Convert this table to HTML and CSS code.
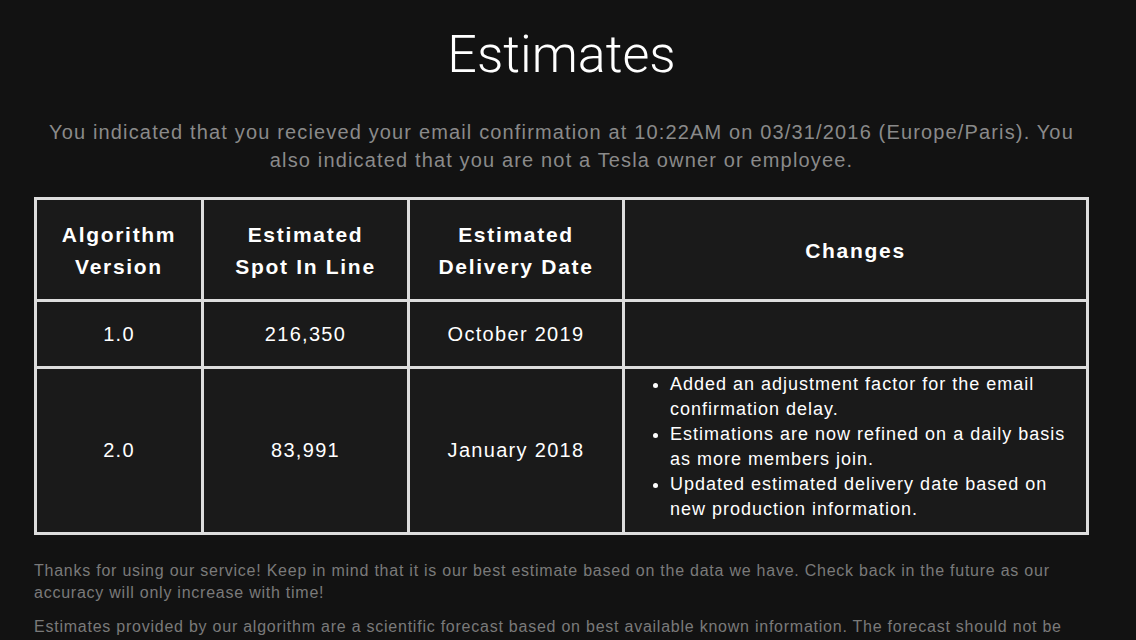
FILE: index.html
```html
<!DOCTYPE html>
<html>
<head>
<meta charset="utf-8">
<link rel="stylesheet" href="styles.css">
</head>
<body>
<main class="page">
  <h1 class="title">Estimates</h1>
  <p class="intro">You indicated that you recieved your email confirmation at 10:22AM on 03/31/2016 (Europe/Paris). You also indicated that you are not a Tesla owner or employee.</p>
  <table class="estimates">
    <colgroup>
      <col class="c1"><col class="c2"><col class="c3"><col class="c4">
    </colgroup>
    <thead>
      <tr>
        <th>Algorithm<br>Version</th>
        <th>Estimated<br>Spot In Line</th>
        <th>Estimated<br>Delivery Date</th>
        <th>Changes</th>
      </tr>
    </thead>
    <tbody>
      <tr class="r1">
        <td>1.0</td>
        <td>216,350</td>
        <td>October 2019</td>
        <td></td>
      </tr>
      <tr class="r2">
        <td>2.0</td>
        <td>83,991</td>
        <td>January 2018</td>
        <td class="changes">
          <ul>
            <li>Added an adjustment factor for the email confirmation delay.</li>
            <li>Estimations are now refined on a daily basis as more members join.</li>
            <li>Updated estimated delivery date based on new production information.</li>
          </ul>
        </td>
      </tr>
    </tbody>
  </table>
  <p class="note">Thanks for using our service! Keep in mind that it is our best estimate based on the data we have. Check back in the future as our accuracy will only increase with time!</p>
  <p class="note">Estimates provided by our algorithm are a scientific forecast based on best available known information. The forecast should not be relied upon as a guarantee of delivery dates.</p>
</main>
</body>
</html>
```

FILE: styles.css
```css
html, body {
  margin: 0;
  padding: 0;
  background: #121212;
  overflow: hidden;
}
.page {
  padding: 22px 47px 0 34px;
  font-family: "Liberation Sans", Arial, sans-serif;
  color: #fff;
}
.title {
  margin: 0;
  text-align: center;
  font-family: Roboto, "Liberation Sans", sans-serif;
  font-weight: 300;
  font-size: 52px;
  line-height: 66px;
  letter-spacing: 0;
  color: #fff;
}
.intro {
  margin: 30px 0 0;
  text-align: center;
  font-size: 20px;
  line-height: 28px;
  letter-spacing: 1.15px;
  color: #8a8a8a;
}
.estimates {
  margin-top: 23px;
  width: 1052px;
  table-layout: fixed;
  border-collapse: collapse;
  border: 3px solid #ddd;
}
.c1 { width: 167px; }
.c2 { width: 206px; }
.c3 { width: 215px; }
.c4 { width: 464px; }
.estimates th,
.estimates td {
  border: 3px solid #ddd;
  background: #1a1a1a;
  text-align: center;
  vertical-align: middle;
  padding: 0;
}
.estimates th {
  height: 97px;
  padding-top: 2px;
  font-size: 21px;
  font-weight: bold;
  line-height: 32px;
  letter-spacing: 1.7px;
}
.estimates td {
  font-size: 20px;
  line-height: 31px;
  letter-spacing: 1.3px;
}
.r1 td { height: 64px; }
.r2 td { height: 163px; }
.estimates td.changes {
  height: 155px;
  text-align: left;
  padding: 0 12px 8px 0;
}
.changes ul {
  margin: 0;
  padding: 0 0 0 45px;
}
.changes li {
  font-size: 18px;
  line-height: 25px;
  letter-spacing: 1px;
}
.note {
  margin: 25px 0 0;
  font-size: 16px;
  line-height: 22px;
  letter-spacing: 0.76px;
  color: #7a7a7a;
}
.note + .note {
  margin-top: 12px;
}
```
